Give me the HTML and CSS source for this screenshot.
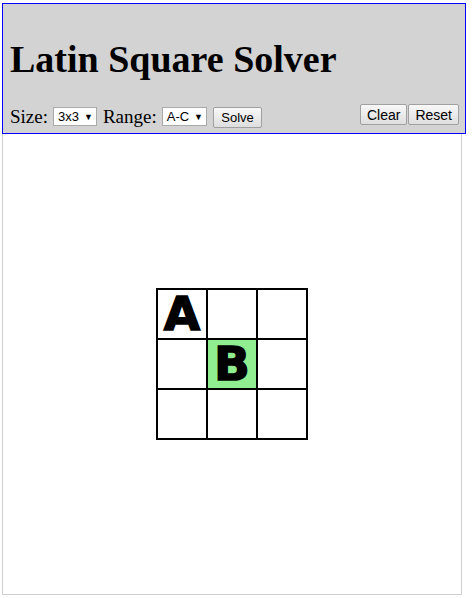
FILE: index.html
```html
<!DOCTYPE html>
<html>
<head>
<meta charset="utf-8">
<link rel="stylesheet" href="styles.css">
</head>
<body>
<div class="header">
  <h1 class="title">Latin Square Solver</h1>
  <div class="controls">
    <div class="group">
      <span class="label">Size:</span>
      <span class="select">3x3 <span class="arrow">▼</span></span>
      <span class="label">Range:</span>
      <span class="select">A-C <span class="arrow">▼</span></span>
      <button class="btn solve">Solve</button>
    </div>
    <div class="group right">
      <button class="btn">Clear</button><button class="btn">Reset</button>
    </div>
  </div>
</div>
<div class="board">
  <div class="grid">
    <div class="cell">A</div><div class="cell"></div><div class="cell"></div>
    <div class="cell"></div><div class="cell given">B</div><div class="cell"></div>
    <div class="cell"></div><div class="cell"></div><div class="cell"></div>
  </div>
</div>
</body>
</html>
```
FILE: styles.css
```css
html, body { margin: 0; padding: 0; background: #fff; }
body { font-family: "Liberation Serif", "Times New Roman", serif; }
.header {
  margin: 3px 0 0 2px;
  width: 462px;
  height: 129px;
  border: 1px solid #0000ff;
  background: #d3d3d3;
  display: flex;
  flex-direction: column;
  justify-content: flex-end;
  box-sizing: content-box;
}
.title {
  margin: 0 0 25px 7px;
  font-size: 38px;
  font-weight: bold;
  line-height: 40px;
}
.controls {
  display: flex;
  justify-content: space-between;
  align-items: flex-end;
  padding: 0 6px 5px 7px;
}
.group { display: flex; align-items: center; }
.right { padding-bottom: 3px; }
.label { font-size: 19px; margin-right: 5px; }
.select {
  display: inline-flex;
  align-items: center;
  box-sizing: border-box;
  height: 19px;
  padding: 0 3px 0 4px;
  border: 1px solid #a9a9a9;
  background: #fff;
  font-family: "Liberation Sans", Arial, sans-serif;
  font-size: 13px;
  margin-right: 6px;
}
.arrow { font-size: 9px; margin-left: 5px; }
.btn {
  box-sizing: border-box;
  height: 21px;
  padding: 0 6px;
  border: 1px solid #a0a0a0;
  border-radius: 2px;
  background: linear-gradient(#f8f8f8, #dedede);
  font-family: "Liberation Sans", Arial, sans-serif;
  font-size: 14px;
  color: #000;
  margin: 0;
}
.solve { height: 21px; margin-top: 2px; width: 49px; font-size: 13px; }
.right .btn + .btn { margin-left: 1px; }
.board {
  margin-left: 2px;
  width: 458px;
  height: 460px;
  border: 1px solid #cfcfcf;
  border-top: none;
  display: flex;
  align-items: center;
  justify-content: center;
}
.grid {
  display: grid;
  grid-template-columns: repeat(3, 48px);
  grid-template-rows: repeat(3, 48px);
  gap: 2px;
  padding: 2px;
  background: #000;
}
.cell {
  background: #fff;
  display: flex;
  align-items: flex-end;
  justify-content: center;
  font-family: "DejaVu Sans", sans-serif;
  font-weight: bold;
  font-size: 47px;
  line-height: 1;
  padding-bottom: 1px;
  -webkit-text-stroke: 1.5px #000;
}
.given { background: #90ee90; }
```
